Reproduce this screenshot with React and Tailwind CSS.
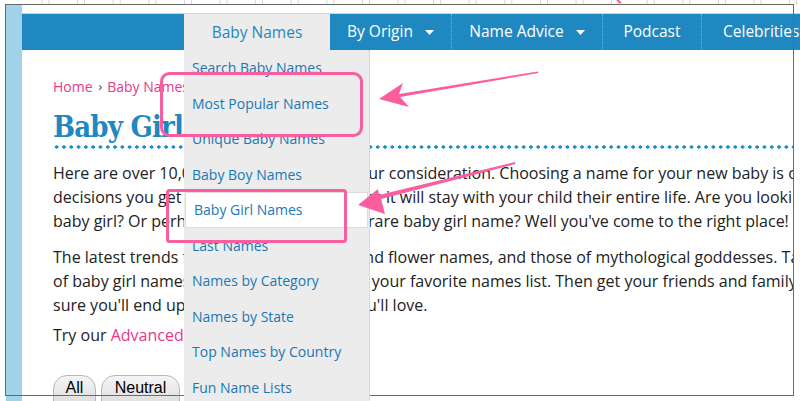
import React from "react";

const menuItems = [
  "Search Baby Names",
  "Most Popular Names",
  "Unique Baby Names",
  "Baby Boy Names",
  "Baby Girl Names",
  "Last Names",
  "Names by Category",
  "Names by State",
  "Top Names by Country",
  "Fun Name Lists",
];

const rulerTicks = [];
for (let i = 0; i < 22; i++) {
  const x = 42 + i * 35.6;
  rulerTicks.push(x, x + 7);
}

const Caret = () => (
  <svg width="9" height="5" viewBox="0 0 9 5" className="ml-3 mt-px">
    <path d="M0 0h9L4.5 5z" fill="#fff" />
  </svg>
);

const NavItem = ({ w, children, caret }) => (
  <div
    className={`${w} flex items-center justify-center border-r border-dotted border-[#6fb6dc]`}
  >
    <span>{children}</span>
    {caret && <Caret />}
  </div>
);

export default function App() {
  return (
    <div className="relative w-[800px] h-[401px] overflow-hidden bg-white font-['Open_Sans',sans-serif]">
      {/* ruler strip on top */}
      <svg className="absolute left-0 top-0" width="800" height="5">
        {rulerTicks.map((x, i) => (
          <line key={i} x1={x} x2={x} y1="0" y2="5" stroke="#d4d4d4" strokeWidth="1" />
        ))}
        <path d="M617 0 L621 3" stroke="#f25c9b" strokeWidth="2" />
      </svg>

      <div className="flex h-full pt-[5px] pl-[6px]">
        <div className="w-[16px] shrink-0 bg-[#a0d3ea]" />
        <div className="flex-1 min-w-0">
          <div className="h-[8px]" />
          <div className="h-px bg-[#b6ddf0]" />
          <nav className="h-[36px] flex bg-[#1f88c0] text-white text-[15.5px] whitespace-nowrap">
            <div className="w-[162px] shrink-0" />
            <div className="w-[146px] shrink-0 flex items-center justify-center bg-[#ececec] text-[#1f88c0] pt-px">
              Baby Names
            </div>
            <NavItem w="w-[122px] shrink-0" caret>By Origin</NavItem>
            <NavItem w="w-[151px] shrink-0" caret>Name Advice</NavItem>
            <NavItem w="w-[99px] shrink-0">Podcast</NavItem>
            <div className="w-[120px] shrink-0 flex items-center pl-[21px]">Celebrities</div>
          </nav>

          <main className="w-[772px] overflow-hidden pl-[31px] text-[#222] whitespace-nowrap">
            <div className="mt-[27px] h-[20px] leading-[20px] text-[14px] flex items-center">
              <span className="text-[#e8388b]">Home</span>
              <span className="ml-[6px] mr-[5px] text-[#333] text-[12px]">›</span>
              <span className="text-[#e8388b]">Baby Names</span>
            </div>
            <h1 className="mt-[12px] leading-[36px] text-[29px] font-bold font-stretch-condensed tracking-[-0.8px] text-[#1f88c0] font-['DejaVu_Serif',serif]">
              Baby Girl Names
            </h1>
            <div className="h-[4px] bg-[radial-gradient(circle,#1f8ccb_1.5px,transparent_1.8px)] bg-[length:7.3px_4px] bg-repeat-x" />

            <div className="mt-[12px] text-[16px] leading-[24px]">
              <div>Here are over 10,000 baby girl ideas for your consideration. Choosing a name for your new baby is one of the most</div>
              <div>decisions you get to make as the parents, as it will stay with your child their entire life. Are you looking for a unique</div>
              <div>baby girl? Or perhaps a vintage name or a rare baby girl name? Well you've come to the right place!</div>
            </div>
            <div className="mt-[12px] text-[16px] leading-[24px]">
              <div>The latest trends for girls include nature and flower names, and those of mythological goddesses. Take a look</div>
              <div>of baby girl names below and add them to your favorite names list. Then get your friends and family to vote, and</div>
              <div>sure you'll end up with a cute girl name you'll love.</div>
            </div>
            <div className="mt-[6px] text-[16px] leading-[24px]">
              Try our <span className="text-[#e8388b]">Advanced Name Search</span>.
            </div>

            <div className="mt-[28px] flex gap-[5px] font-['Liberation_Sans',Arial,sans-serif] text-[16px]">
              <div className="w-[43px] h-[30px] rounded-t-[14px] border border-[#b8b8b8] bg-[linear-gradient(#f5f5f5,#dedede)] text-black flex justify-center">
                All
              </div>
              <div className="w-[79px] h-[30px] rounded-t-[14px] border border-[#b8b8b8] bg-[linear-gradient(#f5f5f5,#dedede)] text-black flex justify-center">
                Neutral
              </div>
            </div>
          </main>
        </div>
      </div>

      {/* outer screenshot frame */}
      <div className="absolute left-[5px] top-[4px] w-[789px] h-[392px] border-[1.5px] border-[#6a6a6a] z-10 pointer-events-none" />

      {/* dropdown menu */}
      <div className="absolute left-[184px] top-[50px] w-[186px] h-[360px] bg-[#ececec] border-r border-dotted border-[#9fcfe9] z-20 text-[14px] text-[#1a78b4] whitespace-nowrap">
        {menuItems.map((m) => (
          <div
            key={m}
            className={
              m === "Baby Girl Names"
                ? "h-[35.5px] flex items-center pl-[8px] bg-white border border-[#dcdcdc] mx-px"
                : "h-[35.5px] flex items-center pl-[8px]"
            }
          >
            {m}
          </div>
        ))}
      </div>

      {/* pink annotations */}
      <svg className="absolute left-0 top-0 z-30 pointer-events-none" width="800" height="401">
        <rect x="161.5" y="73.5" width="200" height="62" rx="8" fill="none" stroke="#fa5e9e" strokeWidth="3" />
        <rect x="167.5" y="190.5" width="178" height="51" rx="2" fill="none" stroke="#fa5e9e" strokeWidth="3" />
        <path d="M538 71.5 L538.5 73 L400 97 L409 107 L379 99 L403 83 L399 94 Z" fill="#fa5e9e" />
        <path d="M515 162 L515.5 164 L381 199 L385 214 L358 205 L378 189 L379 195 Z" fill="#fa5e9e" />
      </svg>
    </div>
  );
}
